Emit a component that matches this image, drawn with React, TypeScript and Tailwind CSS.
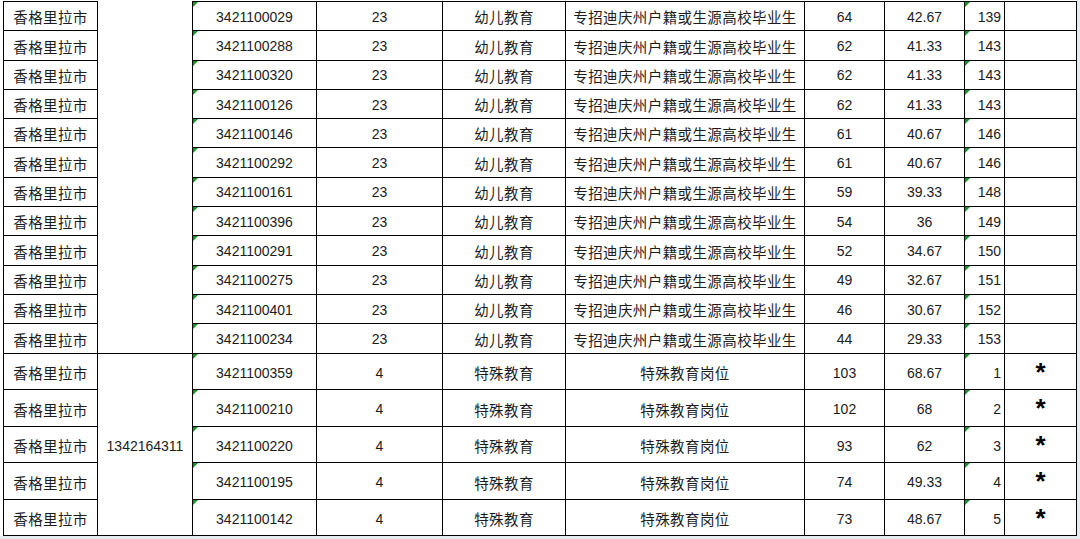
import React from 'react'

const general = [
  ['3421100029', '64', '42.67', '139'],
  ['3421100288', '62', '41.33', '143'],
  ['3421100320', '62', '41.33', '143'],
  ['3421100126', '62', '41.33', '143'],
  ['3421100146', '61', '40.67', '146'],
  ['3421100292', '61', '40.67', '146'],
  ['3421100161', '59', '39.33', '148'],
  ['3421100396', '54', '36', '149'],
  ['3421100291', '52', '34.67', '150'],
  ['3421100275', '49', '32.67', '151'],
  ['3421100401', '46', '30.67', '152'],
  ['3421100234', '44', '29.33', '153'],
]

const special = [
  ['3421100359', '103', '68.67', '1'],
  ['3421100210', '102', '68', '2'],
  ['3421100220', '93', '62', '3'],
  ['3421100195', '74', '49.33', '4'],
  ['3421100142', '73', '48.67', '5'],
]

// little green "number stored as text" marker
function Flag() {
  return (
    <span className="absolute left-0 top-0 h-0 w-0 border-t-[5px] border-r-[5px] border-t-[#1f8f2a] border-r-transparent" />
  )
}

const cell = 'border border-black p-0 text-center align-middle'
const num = "font-['Liberation_Sans',sans-serif] text-[14px]"
const zh = "font-['Noto_Sans_CJK_SC',sans-serif] text-[14.5px] tracking-[0.4px]"

export default function App() {
  return (
    <div className="h-[539px] w-[1080px] overflow-hidden bg-[#e6ebf0]">
      <div className="h-[536px] w-[1076px] bg-white pl-[3px] pt-[1px]">
        <table className="w-[1073px] table-fixed border-collapse text-[#1c1c1c]">
          <colgroup>
            <col className="w-[94px]" />
            <col className="w-[95px]" />
            <col className="w-[124px]" />
            <col className="w-[126px]" />
            <col className="w-[123px]" />
            <col className="w-[239px]" />
            <col className="w-[80px]" />
            <col className="w-[80px]" />
            <col className="w-[40px]" />
            <col className="w-[72px]" />
          </colgroup>
          <tbody>
            {general.map(([id, score, pct, rank], i) => (
              <tr key={id} className="h-[29.3px] [&>td]:pt-[2px]">
                <td className={`${cell} ${zh}`}>香格里拉市</td>
                {i === 0 && <td rowSpan={12} className={`${cell} border-t-0`} />}
                <td className={`${cell} ${num} relative`}><Flag />{id}</td>
                <td className={`${cell} ${num}`}>23</td>
                <td className={`${cell} ${zh}`}>幼儿教育</td>
                <td className={`${cell} ${zh}`}>专招迪庆州户籍或生源高校毕业生</td>
                <td className={`${cell} ${num}`}>{score}</td>
                <td className={`${cell} ${num}`}>{pct}</td>
                <td className={`${cell} ${num} relative pr-[3px] text-right`}><Flag />{rank}</td>
                <td className={cell} />
              </tr>
            ))}
            {special.map(([id, score, pct, rank], i) => (
              <tr key={id} className="h-[36.5px] [&>td]:pt-[4px]">
                <td className={`${cell} ${zh}`}>香格里拉市</td>
                {i === 0 && <td rowSpan={5} className={`${cell} ${num}`}>1342164311</td>}
                <td className={`${cell} ${num} relative`}><Flag />{id}</td>
                <td className={`${cell} ${num}`}>4</td>
                <td className={`${cell} ${zh}`}>特殊教育</td>
                <td className={`${cell} ${zh}`}>特殊教育岗位</td>
                <td className={`${cell} ${num}`}>{score}</td>
                <td className={`${cell} ${num}`}>{pct}</td>
                <td className={`${cell} ${num} relative pr-[3px] text-right`}><Flag />{rank}</td>
                <td className={`${cell} relative`}>
                  <span className="absolute left-0 right-0 top-[5px] text-center font-['Liberation_Sans',sans-serif] text-[26px] font-bold leading-none text-black">*</span>
                </td>
              </tr>
            ))}
          </tbody>
        </table>
      </div>
    </div>
  )
}
